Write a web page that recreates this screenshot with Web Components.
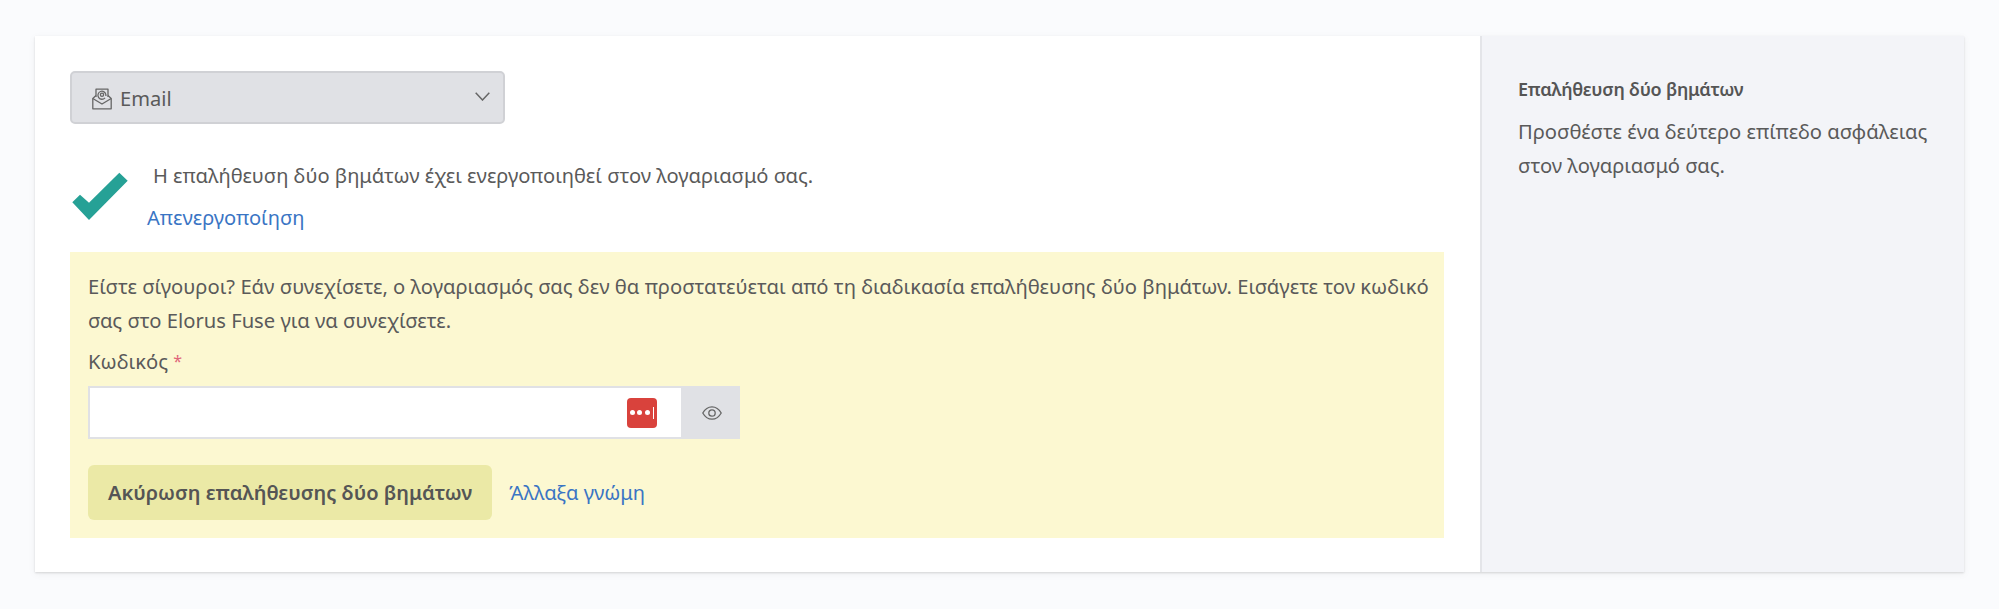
<!DOCTYPE html>
<html lang="el">
<head>
<meta charset="utf-8">
<title>Επαλήθευση δύο βημάτων</title>
<style>
  html { background: #fafbfd; }
  body { margin: 0; padding: 36px 35px 37px; font: 20.1px/34px "Noto Sans", sans-serif; color: #5a5a5a; }
</style>
</head>
<body>
<settings-card>
  <method-select>Email</method-select>
  <status-line>
    Η επαλήθευση δύο βημάτων έχει ενεργοποιηθεί στον λογαριασμό σας.
    <a slot="action">Απενεργοποίηση</a>
  </status-line>
  <confirm-box>
    Είστε σίγουροι? Εάν συνεχίσετε, ο λογαριασμός σας δεν θα προστατεύεται από τη διαδικασία επαλήθευσης δύο βημάτων. Εισάγετε τον κωδικό σας στο Elorus Fuse για να συνεχίσετε.
    <password-field slot="field" label="Κωδικός"></password-field>
    <span slot="submit">Ακύρωση επαλήθευσης δύο βημάτων</span>
    <span slot="cancel">Άλλαξα γνώμη</span>
  </confirm-box>
  <side-help slot="side" heading="Επαλήθευση δύο βημάτων">
    Προσθέστε ένα δεύτερο επίπεδο ασφάλειας στον λογαριασμό σας.
  </side-help>
</settings-card>

<script>
class SettingsCard extends HTMLElement {
  constructor() {
    super();
    this.attachShadow({ mode: 'open' });
    this.shadowRoot.innerHTML = `
      <style>
        :host {
          display: flex;
          height: 536px;
          background: #fff;
          box-shadow: 0 1px 2px rgba(0, 0, 0, .13), 0 2px 8px rgba(0, 0, 0, .05);
        }
        .main {
          flex: 1;
          padding: 35px 36px 35px 35px;
          border-right: 2px solid #e4e5e9;
        }
        .side { width: 482px; flex: none; background: #f3f4f8; }
      </style>
      <div class="main"><slot></slot></div>
      <div class="side"><slot name="side"></slot></div>
    `;
  }
}

class MethodSelect extends HTMLElement {
  constructor() {
    super();
    this.attachShadow({ mode: 'open' });
    this.shadowRoot.innerHTML = `
      <style>
        :host {
          display: flex;
          align-items: center;
          box-sizing: border-box;
          width: 435px;
          height: 53px;
          padding: 2px 13px 0 20px;
          background: #e0e1e5;
          border: 2px solid #d0d1d5;
          border-radius: 5px;
        }
        .icon { width: 20px; height: 22px; margin-right: 8px; }
        .text { flex: 1; }
        .arrow { width: 15px; height: 9px; margin-top: -4px; }
      </style>
      <svg class="icon" viewBox="0 0 20 22" fill="none" stroke="#666" stroke-width="1.3" stroke-linejoin="round">
        <path d="M4 9V1.2h12V9"/>
        <path d="M4 7.500 .8 10.500V20.800h18.400V10.500L16 7.500"/>
        <path d="M.8 10.500 10 16l9.200-5.500"/>
        <circle cx="10" cy="6.800" r="1.600"/>
        <path d="M13 9.800a4 4 0 1 1 .9-3v1.200"/>
      </svg>
      <span class="text"><slot></slot></span>
      <svg class="arrow" viewBox="0 0 15 9" fill="none" stroke="#666" stroke-width="1.5">
        <path d="M.7.7 7.500 8 14.300.7"/>
      </svg>
    `;
  }
}

class StatusLine extends HTMLElement {
  constructor() {
    super();
    this.attachShadow({ mode: 'open' });
    this.shadowRoot.innerHTML = `
      <style>
        :host { display: flex; margin: 35px 0 17px; }
        svg { width: 58px; height: 49px; flex: none; margin: 13px 18px 0 1px; }
        .msg { padding-left: 6px; }
        .action { margin-top: 8px; color: #3a75c4; }
      </style>
      <svg viewBox="0 0 58 49">
        <path fill="#26a196" d="M1.3 30.300 9 22.700l9 8 30.300-30 8.400 8L18 48z"/>
      </svg>
      <div>
        <div class="msg"><slot></slot></div>
        <div class="action"><slot name="action"></slot></div>
      </div>
    `;
  }
}

class PasswordField extends HTMLElement {
  constructor() {
    super();
    this.attachShadow({ mode: 'open' });
    this.shadowRoot.innerHTML = `
      <style>
        :host { display: block; margin-top: 7px; }
        .star { color: #e0667a; font-size: 16px; vertical-align: 2px; }
        .row { display: flex; width: 652px; height: 53px; margin-top: 8px; }
        .input {
          flex: 1;
          display: flex;
          align-items: center;
          justify-content: flex-end;
          padding-right: 24px;
          background: #fff;
          border: 2px solid #e0e1e5;
        }
        .lastpass {
          display: flex;
          align-items: center;
          justify-content: center;
          gap: 2.500px;
          width: 30px;
          height: 30px;
          background: #d9423c;
          border-radius: 4px;
        }
        .lastpass i { width: 5px; height: 5px; border-radius: 50%; background: #fff; }
        .lastpass b { width: 1.500px; height: 12px; background: #fff; margin-left: .5px; }
        .addon {
          width: 57px;
          display: flex;
          align-items: center;
          justify-content: center;
          background: #e0e1e5;
        }
        .addon svg { width: 20px; height: 14px; }
      </style>
      <div><span class="label"></span> <span class="star">*</span></div>
      <div class="row">
        <div class="input">
          <div class="lastpass"><i></i><i></i><i></i><b></b></div>
        </div>
        <div class="addon">
          <svg viewBox="0 0 20 14" fill="none" stroke="#666" stroke-width="1.3">
            <path d="M.8 7C3 3 6.200.8 10 .8S17 3 19.200 7C17 11 13.800 13.200 10 13.200S3 11 .8 7z"/>
            <circle cx="10" cy="7" r="3.200"/>
          </svg>
        </div>
      </div>
    `;
    this.shadowRoot.querySelector('.label').textContent = this.getAttribute('label');
  }
}

class ConfirmBox extends HTMLElement {
  constructor() {
    super();
    this.attachShadow({ mode: 'open' });
    this.shadowRoot.innerHTML = `
      <style>
        :host {
          display: block;
          padding: 17px 8px 18px 18px;
          background: #fcf8d1;
          font-size: 20.2px;
        }
        .actions { display: flex; align-items: center; margin-top: 26px; }
        .submit {
          height: 55px;
          line-height: 55px;
          padding: 0 20px;
          background: #ebe9a6;
          border-radius: 6px;
          font-weight: 600;
          font-size: 20.1px;
          color: #555;
        }
        .cancel { margin-left: 17px; color: #3a75c4; font-size: 20.1px; }
      </style>
      <slot></slot>
      <slot name="field"></slot>
      <div class="actions">
        <div class="submit"><slot name="submit"></slot></div>
        <div class="cancel"><slot name="cancel"></slot></div>
      </div>
    `;
  }
}

class SideHelp extends HTMLElement {
  constructor() {
    super();
    this.attachShadow({ mode: 'open' });
    this.shadowRoot.innerHTML = `
      <style>
        :host { display: block; padding: 36px 28px 0 36px; font-size: 20.2px; }
        .title { font-weight: 600; font-size: 18px; letter-spacing: -.25px; margin-bottom: 8px; color: #555; }
      </style>
      <div class="title"></div>
      <slot></slot>
    `;
    this.shadowRoot.querySelector('.title').textContent = this.getAttribute('heading');
  }
}

customElements.define('settings-card', SettingsCard);
customElements.define('method-select', MethodSelect);
customElements.define('status-line', StatusLine);
customElements.define('password-field', PasswordField);
customElements.define('confirm-box', ConfirmBox);
customElements.define('side-help', SideHelp);
</script>
</body>
</html>
